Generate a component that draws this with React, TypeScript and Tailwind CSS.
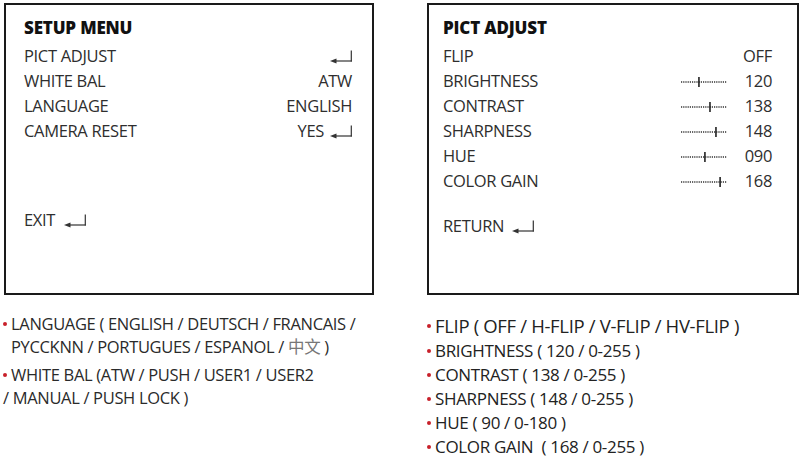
import React from "react";

const EnterIcon = () => (
  <svg width="22" height="14" viewBox="0 0 22 14" className="shrink-0">
    <line x1="21.3" y1="0.5" x2="21.3" y2="11.6" stroke="#333" strokeWidth="1.2" />
    <line x1="5" y1="11" x2="21.9" y2="11" stroke="#333" strokeWidth="1.2" />
    <polygon points="0,11 6.5,8.4 6.5,13.6" fill="#333" />
  </svg>
);

// dotted track with a tick mark, drawn as svg
const Slider = ({ pos }: { pos: number }) => (
  <svg width="46" height="11" viewBox="0 0 46 11" className="shrink-0">
    <line x1="0" y1="6" x2="46" y2="6" stroke="#333" strokeWidth="1.5" strokeDasharray="1.2 1" />
    <rect x={pos * 46 - 0.8} y="1" width="1.6" height="10" fill="#222" />
  </svg>
);

const Row = ({ label, children }: { label: string; children?: React.ReactNode }) => (
  <div className="flex items-center justify-between h-[25px]">
    <span>{label}</span>
    <div className="flex items-center">{children}</div>
  </div>
);

const pictRows = [
  { label: "BRIGHTNESS", pos: 0.39, value: "120" },
  { label: "CONTRAST", pos: 0.63, value: "138" },
  { label: "SHARPNESS", pos: 0.76, value: "148" },
  { label: "HUE", pos: 0.52, value: "090" },
  { label: "COLOR GAIN", pos: 0.85, value: "168" },
];

const Bullet = () => (
  <span className="w-[8px] h-[1lh] shrink-0 flex items-center">
    <span className="w-[4px] h-[4px] rounded-full bg-[#c8202a]" />
  </span>
);

export default function App() {
  return (
    <div className="w-[800px] h-[466px] bg-white font-['Open_Sans',sans-serif] text-[16.5px] tracking-[-0.02em] text-[#2e2e2e] overflow-hidden">
      <div className="flex pt-[3px]">
        {/* Setup menu */}
        <div className="ml-[4px] w-[370px] h-[292px] border-2 border-[#1a1a1a] pt-[10px] pl-[18px] pr-[20px]">
          <div className="h-[25px] flex items-center text-[17px] font-extrabold text-[#111] tracking-[-0.01em]">
            SETUP MENU
          </div>
          <div className="mt-[4px]">
            <Row label="PICT ADJUST">
              <EnterIcon />
            </Row>
            <Row label="WHITE BAL">ATW</Row>
            <Row label="LANGUAGE">ENGLISH</Row>
            <Row label="CAMERA RESET">
              <span>YES</span>
              <span className="ml-[6px]">
                <EnterIcon />
              </span>
            </Row>
          </div>
          <div className="mt-[64px] flex items-center h-[25px] gap-[9px]">
            <span>EXIT</span>
            <EnterIcon />
          </div>
        </div>

        {/* Pict adjust */}
        <div className="ml-[53px] w-[372px] h-[292px] border-2 border-[#1a1a1a] pt-[10px] pl-[14px] pr-[25px]">
          <div className="h-[25px] flex items-center text-[17px] font-extrabold text-[#111] tracking-[-0.01em]">
            PICT ADJUST
          </div>
          <div className="mt-[4px]">
            <Row label="FLIP">OFF</Row>
            {pictRows.map((r) => (
              <Row key={r.label} label={r.label}>
                <Slider pos={r.pos} />
                <span className="w-[45px] text-right">{r.value}</span>
              </Row>
            ))}
          </div>
          <div className="mt-[20px] flex items-center h-[25px] gap-[8px]">
            <span>RETURN</span>
            <EnterIcon />
          </div>
        </div>
      </div>

      <div className="flex">
        {/* Left notes */}
        <div className="w-[423px] pl-[3px] pt-[17px] leading-[23px] text-[#2a2a2a]">
          <div className="flex">
            <Bullet />
            <div>
              <div>LANGUAGE ( ENGLISH / DEUTSCH / FRANCAIS /</div>
              <div>
                PYCCKNN / PORTUGUES / ESPANOL /{" "}
                <span className="font-['Noto_Sans_CJK_SC',sans-serif] text-[#777]">中文</span> )
              </div>
            </div>
          </div>
          <div className="flex mt-[5px]">
            <Bullet />
            <div>WHITE BAL (ATW / PUSH / USER1 / USER2</div>
          </div>
          <div>/ MANUAL / PUSH LOCK )</div>
        </div>

        {/* Right notes */}
        <div className="pl-[4px] pt-[18px] text-[#222]">
          <div className="flex h-[25px] leading-[25px] text-[18.5px]">
            <Bullet />
            <span>FLIP ( OFF / H-FLIP / V-FLIP / HV-FLIP )</span>
          </div>
          <div className="leading-[24px] text-[17px] mt-[1px]">
            <div className="flex"><Bullet /><span>BRIGHTNESS ( 120 / 0-255 )</span></div>
            <div className="flex"><Bullet /><span>CONTRAST ( 138 / 0-255 )</span></div>
            <div className="flex"><Bullet /><span>SHARPNESS ( 148 / 0-255 )</span></div>
            <div className="flex"><Bullet /><span>HUE ( 90 / 0-180 )</span></div>
            <div className="flex"><Bullet /><span className="whitespace-pre">COLOR GAIN  ( 168 / 0-255 )</span></div>
          </div>
        </div>
      </div>
    </div>
  );
}
